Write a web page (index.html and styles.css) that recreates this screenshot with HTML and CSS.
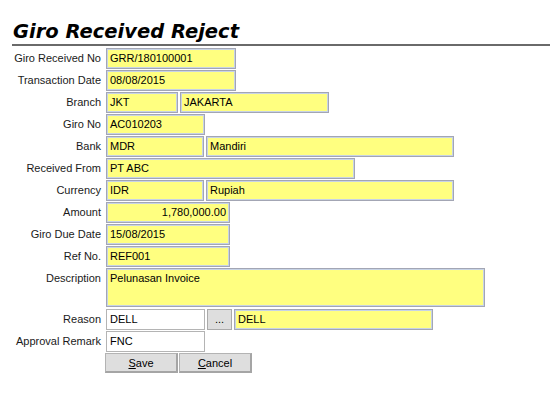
FILE: index.html
```html
<!DOCTYPE html>
<html>
<head>
<meta charset="utf-8">
<link rel="stylesheet" href="styles.css">
</head>
<body>
<div class="page">
  <h1 class="title">Giro Received Reject</h1>
  <div class="form">
    <div class="row"><label class="lbl">Giro Received No</label><div class="fld w130">GRR/180100001</div></div>
    <div class="row"><label class="lbl">Transaction Date</label><div class="fld w130">08/08/2015</div></div>
    <div class="row"><label class="lbl">Branch</label><div class="fld w72">JKT</div><div class="fld w149">JAKARTA</div></div>
    <div class="row"><label class="lbl">Giro No</label><div class="fld w99">AC010203</div></div>
    <div class="row"><label class="lbl">Bank</label><div class="fld w98">MDR</div><div class="fld w248">Mandiri</div></div>
    <div class="row"><label class="lbl">Received From</label><div class="fld w249">PT ABC</div></div>
    <div class="row"><label class="lbl">Currency</label><div class="fld w98">IDR</div><div class="fld w248">Rupiah</div></div>
    <div class="row"><label class="lbl">Amount</label><div class="fld w124 num">1,780,000.00</div></div>
    <div class="row"><label class="lbl">Giro Due Date</label><div class="fld w124">15/08/2015</div></div>
    <div class="row"><label class="lbl">Ref No.</label><div class="fld w124">REF001</div></div>
    <div class="row tall"><label class="lbl">Description</label><div class="fld area">Pelunasan Invoice</div></div>
    <div class="row"><label class="lbl">Reason</label><div class="fld white w99">DELL</div><div class="btn dots">...</div><div class="fld w199">DELL</div></div>
    <div class="row"><label class="lbl">Approval Remark</label><div class="fld white w99">FNC</div></div>
    <div class="row actions"><div class="btn act"><u>S</u>ave</div><div class="btn act"><u>C</u>ancel</div></div>
  </div>
</div>
</body>
</html>
```
FILE: styles.css
```css
html, body { margin: 0; padding: 0; background: #fff; }
body { font-family: "Liberation Sans", Arial, sans-serif; font-size: 11px; color: #000; }
.page { padding-top: 20px; }
.title {
  margin: 0 0 0 12px;
  font-family: "DejaVu Sans", Verdana, sans-serif;
  font-weight: bold; font-style: italic;
  font-size: 19.5px; line-height: 24px;
  padding-left: 1px;
  border-bottom: 2px solid #6a6a6a;
}
.form { display: flex; flex-direction: column; gap: 1px; padding-top: 2px; }
.row { display: flex; align-items: flex-start; height: 21px; gap: 2px; }
.row.tall { height: 39px; margin-bottom: 1px; }
.lbl {
  width: 89px; margin-left: 12px; margin-right: 3px; text-align: right;
  white-space: nowrap; line-height: 21px; color: #1a1a1a;
}
.fld {
  box-sizing: border-box; height: 21px; line-height: 19px;
  padding: 0 3px; background: #ffff80;
  border: 1px solid #a3a6b4;
  box-shadow: inset 0 0 0 1px #c7d3e6;
  white-space: nowrap; overflow: hidden;
}
.fld.white { background: #fff; box-shadow: none; border-color: #b4b4b4; }
.num { text-align: right; }
.area { width: 379px; height: 39px; }
.w130 { width: 130px; }
.w72 { width: 72px; }
.w149 { width: 149px; }
.w99 { width: 99px; }
.w98 { width: 98px; }
.w248 { width: 248px; }
.w249 { width: 249px; }
.w124 { width: 124px; }
.w199 { width: 199px; }
.btn {
  box-sizing: border-box; height: 21px; line-height: 19px; text-align: center;
  background: #dedede; border: 1px solid #aaaaaa;
}
.dots { width: 25px; }
.actions { padding-left: 105px; gap: 1px; height: 20px; }
.act { width: 73px; height: 20px; line-height: 18px; border-width: 1px 2px 2px 1px; border-color: #b3b3b3 #a5a5a5 #a5a5a5 #b3b3b3; }
```
